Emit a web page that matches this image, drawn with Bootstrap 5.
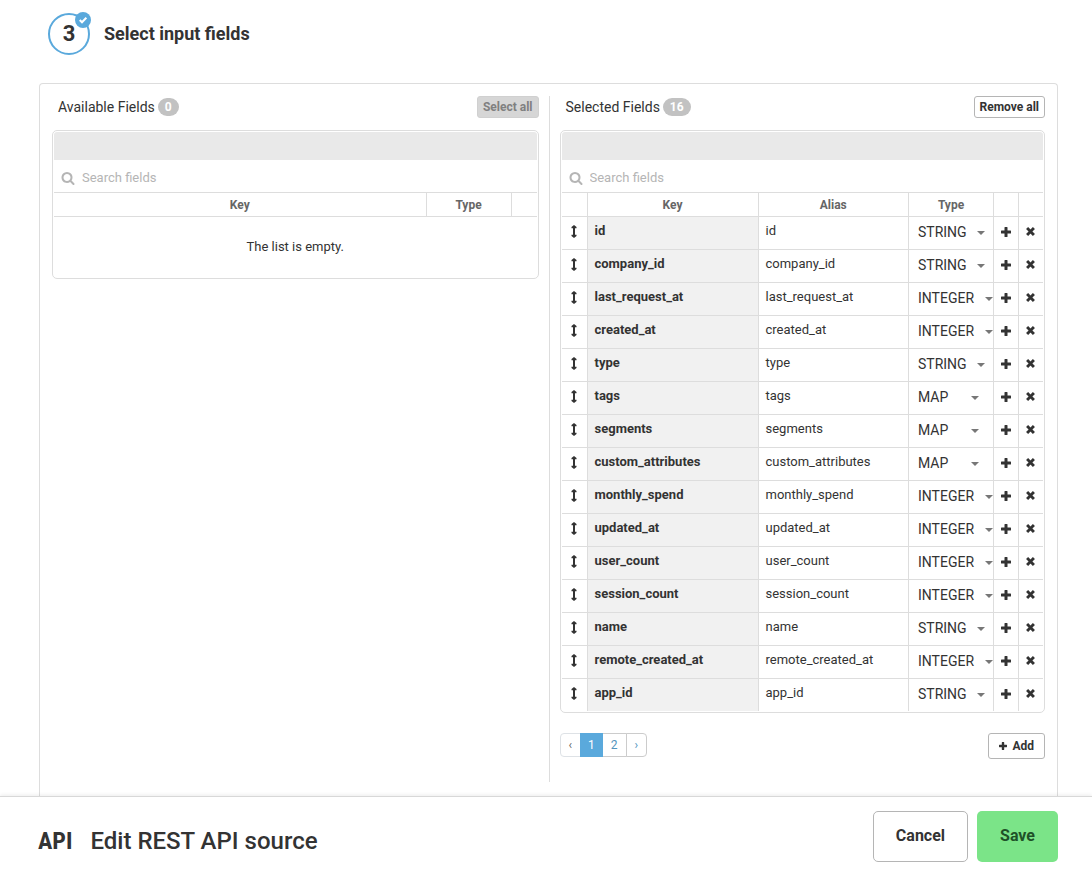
<!DOCTYPE html>
<html lang="en">
<head>
<meta charset="utf-8">
<meta name="viewport" content="width=device-width, initial-scale=1">
<title>Edit REST API source</title>
<link href="https://cdn.jsdelivr.net/npm/bootstrap@5.3.0/dist/css/bootstrap.min.css" rel="stylesheet">
<style>
  :root { --ink: #333; --line: #ddd; --accent: #5aa9dc; }
  body { font-family: Roboto, "Liberation Sans", sans-serif; font-size: 13px; line-height: 18px; color: var(--ink); }
  main { padding: 13px 34px 0 39px; }
  .step-head { gap: 14px; margin-left: 9px; margin-bottom: 28px; }
  .step-num { width: 42px; height: 42px; border: 2px solid var(--accent); font-size: 22px; font-weight: 700; }
  .step-done { top: -3px; right: -3px; width: 16px; height: 16px; background: var(--accent); }
  .step-title { font-size: 18px; line-height: 24px; font-weight: 700; }
  .panel { border: 1px solid var(--line); border-bottom: 0; border-radius: 4px 4px 0 0; padding: 12px 12px 14px; }
  .pane-left { padding-right: 10px; }
  .pane-right { padding-left: 10px; border-left: 1px solid var(--line); }
  .pane-head { height: 22px; margin-bottom: 12px; padding-left: 6px; }
  .pane-title { font-size: 14px; gap: 3px; }
  .count { background: #c2c2c2; font-size: 12px; line-height: 18px; padding: 0 7px; border-radius: 9px; min-width: 21px; }
  .btn-tiny { font-size: 12px; line-height: 16px; font-weight: 700; padding: 2px 5px; border-radius: 3px; }
  .btn-line { border-color: #b5b5b5; background: #fff; color: var(--ink); }
  .btn-muted:disabled { background: #d6d6d6; border-color: #d0d0d0; color: #808080; opacity: 1; }
  .box { border: 1px solid var(--line); border-radius: 5px; padding: 1px; }
  .strip { height: 28px; background: #e9e9e9; border-radius: 3px 3px 0 0; }
  .search { height: 32px; padding: 3px 7px 0; gap: 7px; color: #b5b5b5; }
  .search input { outline: 0; font-size: 13px; color: var(--ink); }
  .search input::placeholder { color: #b5b5b5; opacity: 1; }
  .grid { width: 100%; table-layout: fixed; border-collapse: separate; border-spacing: 0; }
  .grid th, .grid td { border-top: 1px solid var(--line); border-left: 1px solid var(--line); padding: 0; }
  .grid th:first-child, .grid td:first-child { border-left: 0; }
  .grid thead th { height: 24px; font-size: 12px; line-height: 22px; color: #666; text-align: center; }
  .grid tbody td, .grid tbody th { height: 33px; vertical-align: middle; }
  .grid tbody .key, .grid tbody .alias { padding: 0 7px 4px; overflow: hidden; }
  .key { background: #f1f1f1; font-weight: 700; }
  .grid .empty { height: 61px; text-align: center; }
  .c-icon { width: 25px; } .c-drag { width: 26px; } .c-key { width: 171px; } .c-type { width: 85px; }
  .icon-btn { width: 100%; height: 32px; padding: 0 1px 4px 0; border: 0; background: none; color: var(--ink); display: flex; align-items: center; justify-content: center; }
  .icon-btn.plus { padding-bottom: 2px; }
  .type { appearance: none; border: 0; color: var(--ink); font-size: 14px; line-height: 30px; height: 32px; padding: 0 0 2px 9px; display: block;
    background: url("data:image/svg+xml,%3Csvg xmlns='http://www.w3.org/2000/svg' viewBox='0 0 8 4'%3E%3Cpath fill='%23777' d='M0 0h8L4 4z'/%3E%3C/svg%3E") no-repeat right 14px / 8px 4px; }
  .type-STRING { width: 76px; } .type-INTEGER { width: 84px; } .type-MAP { width: 70px; }
  .below { margin-top: 20px; }
  .pagination { --bs-pagination-font-size: 12px; --bs-pagination-padding-x: 8px; --bs-pagination-padding-y: 3px; --bs-pagination-color: #5294bd; --bs-pagination-border-color: #ccc;
    --bs-pagination-active-bg: var(--accent); --bs-pagination-active-border-color: var(--accent); --bs-pagination-border-radius: 4px; line-height: 16px; }
  .pagination .page-num { padding-left: 7px; padding-right: 7px; }
  .btn-add { font-size: 12px; line-height: 18px; font-weight: 700; padding: 3px 10px; border-radius: 3px; gap: 5px; }
  footer { height: 76px; border-top: 1px solid #d8d8d8; padding: 8px 34px 4px 38px; box-shadow: 0 -1px 4px rgba(0,0,0,.08); }
  .foot-title { gap: 18px; padding-top: 8px; }
  .api-mark { font-family: "Roboto Condensed", "Liberation Sans Narrow", Roboto, sans-serif; font-size: 24px; line-height: 30px; font-weight: 700; }
  .source-title { font-size: 24px; line-height: 30px; font-weight: 500; }
  .foot-actions { gap: 9px; }
  .btn-foot { font-size: 16px; line-height: 24px; font-weight: 700; padding: 12px 22px 13px; border-radius: 5px; }
  .btn-go { background: #7be488; color: #1f5128; }
</style>
</head>
<body class="bg-white d-flex flex-column min-vh-100">
<svg class="d-none" aria-hidden="true">
  <symbol id="i-search" viewBox="0 0 1792 1792"><path fill="currentColor" d="M1216 832q0-185-131.500-316.500t-316.500-131.500-316.500 131.500-131.500 316.500 131.500 316.500 316.500 131.500 316.500-131.500 131.500-316.500zm512 832q0 52-38 90t-90 38q-54 0-90-38l-343-342q-179 124-399 124-143 0-273.500-55.500t-225-150-150-225-55.500-273.500 55.500-273.500 150-225 225-150 273.500-55.500 273.500 55.500 225 150 150 225 55.500 273.500q0 220-124 399l343 343q37 37 37 90z"/></symbol>
  <symbol id="i-plus" viewBox="0 0 10 10"><path fill="currentColor" d="M3.500.5q0-.5.500-.5h2q.500 0 .500.500v3h3q.500 0 .500.500v2q0 .500-.500.500h-3v3q0 .500-.500.500H4q-.500 0-.500-.500v-3h-3Q0 6.500 0 6V4q0-.500.500-.500h3z"/></symbol>
  <symbol id="i-x" viewBox="0 0 10 10"><path stroke="currentColor" stroke-width="3.200" d="M1.200 1.200l7.600 7.600M8.800 1.200l-7.600 7.600"/></symbol>
  <symbol id="i-drag" viewBox="0 0 6 13"><path fill="currentColor" d="M3 0l2.500 2v1.300H4v6.400h1.500V11L3 13 .5 11V9.700H2V3.300H.5V2z"/></symbol>
</svg>

<main class="flex-grow-1 d-flex flex-column">
  <div class="step-head d-flex align-items-center">
    <div class="step-num rounded-circle position-relative d-flex align-items-center justify-content-center">3
      <span class="step-done position-absolute rounded-circle d-flex align-items-center justify-content-center">
        <svg width="8" height="8" viewBox="0 0 8 8" fill="none" stroke="#fff" stroke-width="2"><path d="M.7 4l2.300 2.300L7.300 1.700"/></svg>
      </span>
    </div>
    <h1 class="step-title m-0">Select input fields</h1>
  </div>

  <div class="panel flex-grow-1 d-flex">
    <section class="pane-left w-50">
      <div class="pane-head d-flex align-items-center justify-content-between">
        <h2 class="pane-title fw-normal m-0 d-flex align-items-end">Available Fields <span class="count text-white fw-bold text-center">0</span></h2>
        <button type="button" class="btn btn-tiny btn-muted" disabled>Select all</button>
      </div>
      <div class="box">
        <div class="strip"></div>
        <label class="search d-flex align-items-center">
          <svg width="14" height="14"><use href="#i-search"/></svg>
          <input class="border-0 p-0 flex-grow-1 bg-transparent" type="text" placeholder="Search fields" aria-label="Search available fields">
        </label>
        <table class="grid">
          <colgroup><col><col class="c-type"><col class="c-drag"></colgroup>
          <thead><tr><th scope="col">Key</th><th scope="col">Type</th><th></th></tr></thead>
          <tbody><tr><td class="empty" colspan="3">The list is empty.</td></tr></tbody>
        </table>
      </div>
    </section>

    <section class="pane-right w-50">
      <div class="pane-head d-flex align-items-center justify-content-between">
        <h2 class="pane-title fw-normal m-0 d-flex align-items-end">Selected Fields <span class="count text-white fw-bold text-center">16</span></h2>
        <button type="button" class="btn btn-tiny btn-line">Remove all</button>
      </div>
      <div class="box">
        <div class="strip"></div>
        <label class="search d-flex align-items-center">
          <svg width="14" height="14"><use href="#i-search"/></svg>
          <input class="border-0 p-0 flex-grow-1 bg-transparent" type="text" placeholder="Search fields" aria-label="Search selected fields">
        </label>
        <table class="grid">
          <colgroup><col class="c-icon"><col class="c-key"><col><col class="c-type"><col class="c-icon"><col class="c-icon"></colgroup>
          <thead><tr><th></th><th scope="col">Key</th><th scope="col">Alias</th><th scope="col">Type</th><th></th><th></th></tr></thead>
          <tbody id="fields"></tbody>
        </table>
      </div>
      <div class="below d-flex justify-content-between align-items-start">
        <nav aria-label="Field pages">
          <ul class="pagination m-0">
            <li class="page-item disabled"><a class="page-link bg-white" href="#">‹</a></li>
            <li class="page-item active"><a class="page-link page-num" href="#">1</a></li>
            <li class="page-item"><a class="page-link" href="#">2</a></li>
            <li class="page-item"><a class="page-link" href="#">›</a></li>
          </ul>
        </nav>
        <button type="button" class="btn btn-line btn-add d-flex align-items-center"><svg width="8" height="8"><use href="#i-plus"/></svg>Add</button>
      </div>
    </section>
  </div>
</main>

<footer class="sticky-bottom bg-white d-flex align-items-center justify-content-between">
  <div class="foot-title d-flex align-items-center">
    <span class="api-mark">API</span>
    <h2 class="source-title m-0">Edit REST API source</h2>
  </div>
  <div class="foot-actions d-flex">
    <button type="button" class="btn btn-line btn-foot">Cancel</button>
    <button type="button" class="btn btn-go btn-foot">Save</button>
  </div>
</footer>

<script src="https://cdn.jsdelivr.net/npm/bootstrap@5.3.0/dist/js/bootstrap.bundle.min.js"></script>
<script>
  const types = ["STRING", "INTEGER", "MAP"];
  const fields = [
    ["id", "STRING"], ["company_id", "STRING"], ["last_request_at", "INTEGER"], ["created_at", "INTEGER"],
    ["type", "STRING"], ["tags", "MAP"], ["segments", "MAP"], ["custom_attributes", "MAP"],
    ["monthly_spend", "INTEGER"], ["updated_at", "INTEGER"], ["user_count", "INTEGER"], ["session_count", "INTEGER"],
    ["name", "STRING"], ["remote_created_at", "INTEGER"], ["app_id", "STRING"]
  ];
  document.getElementById("fields").innerHTML = fields.map(([key, type]) => `
    <tr>
      <td><button type="button" class="icon-btn" aria-label="Move ${key}"><svg width="6" height="13"><use href="#i-drag"/></svg></button></td>
      <th class="key" scope="row">${key}</th>
      <td class="alias">${key}</td>
      <td><select class="type type-${type}" aria-label="Type of ${key}">${types.map(t => `<option${t === type ? " selected" : ""}>${t}</option>`).join("")}</select></td>
      <td><button type="button" class="icon-btn plus" aria-label="Add to ${key}"><svg width="10" height="10"><use href="#i-plus"/></svg></button></td>
      <td><button type="button" class="icon-btn" aria-label="Remove ${key}"><svg width="9" height="9"><use href="#i-x"/></svg></button></td>
    </tr>`).join("");
</script>
</body>
</html>
